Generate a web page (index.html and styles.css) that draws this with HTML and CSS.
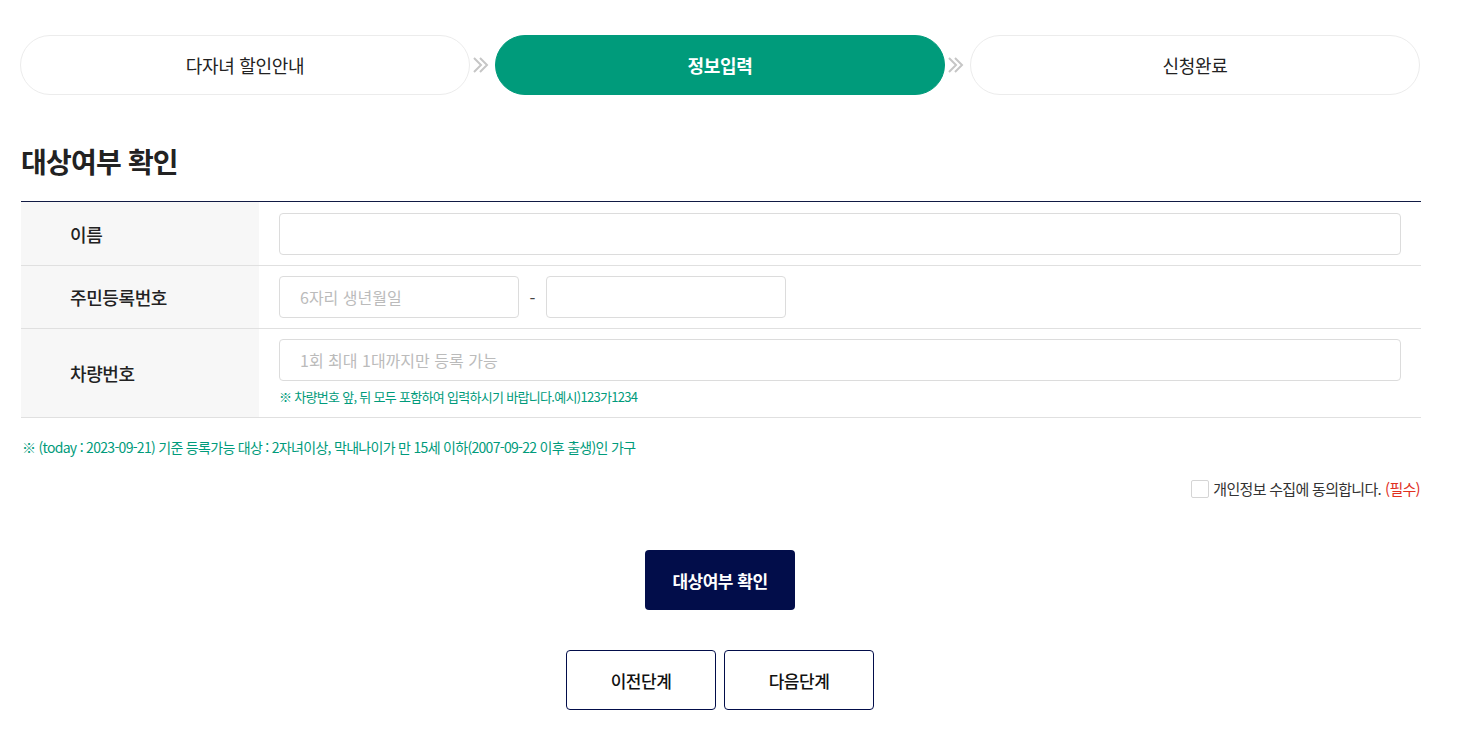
FILE: index.html
```html
<!DOCTYPE html>
<html lang="ko">
<head>
  <meta charset="utf-8">
  <title>다자녀 할인 - 정보입력</title>
  <link rel="stylesheet" href="styles.css">
</head>
<body>
  <div class="container">
    <ol class="steps">
      <li class="step">다자녀 할인안내</li>
      <li class="step-arrow">
        <svg width="18" height="18" viewBox="0 0 18 18"><path d="M2 2l7 7-7 7M8 2l7 7-7 7" fill="none" stroke="#c6c6c6" stroke-width="2"/></svg>
      </li>
      <li class="step active">정보입력</li>
      <li class="step-arrow">
        <svg width="18" height="18" viewBox="0 0 18 18"><path d="M2 2l7 7-7 7M8 2l7 7-7 7" fill="none" stroke="#c6c6c6" stroke-width="2"/></svg>
      </li>
      <li class="step">신청완료</li>
    </ol>

    <h2 class="title">대상여부 확인</h2>

    <table class="form-table">
      <tr>
        <th>이름</th>
        <td><input type="text" class="input full"></td>
      </tr>
      <tr>
        <th>주민등록번호</th>
        <td class="jumin-cell">
          <div class="jumin">
            <input type="text" class="input short" placeholder="6자리 생년월일">
            <span class="dash">-</span>
            <input type="password" class="input short">
          </div>
        </td>
      </tr>
      <tr>
        <th>차량번호</th>
        <td class="car">
          <input type="text" class="input full" placeholder="1회 최대 1대까지만 등록 가능">
          <p class="car-note">※ 차량번호 앞, 뒤 모두 포함하여 입력하시기 바랍니다.예시)123가1234</p>
        </td>
      </tr>
    </table>

    <p class="info">※ (today : 2023-09-21) 기준 등록가능 대상 : 2자녀이상, 막내나이가 만 15세 이하(2007-09-22 이후 출생)인 가구</p>

    <div class="agree">
      <label><input type="checkbox" class="chk"><span class="box"></span>개인정보 수집에 동의합니다. <em>(필수)</em></label>
    </div>

    <div class="btn-center">
      <button class="btn-check">대상여부 확인</button>
    </div>

    <div class="btn-pair">
      <button class="btn-line">이전단계</button>
      <button class="btn-line">다음단계</button>
    </div>
  </div>
</body>
</html>
```

FILE: styles.css
```css
body { margin: 0; font-family: "Noto Sans CJK KR", "Noto Sans", sans-serif; color: #222; background: #fff; }
.container { width: 1400px; margin: 0 0 0 20px; padding-top: 35px; }

.steps { display: flex; align-items: center; list-style: none; margin: 0; padding: 0; }
.step { width: 450px; height: 60px; box-sizing: border-box; border: 1px solid #ececec; border-radius: 30px; display: flex; align-items: center; justify-content: center; font-size: 18px; font-weight: 400; color: #222; letter-spacing: -0.3px; }
.step.active { background: #009b7b; border-color: #009b7b; color: #fff; font-weight: 700; }
.step-arrow { width: 25px; display: flex; justify-content: center; align-items: center; }
.step-arrow svg { display: block; margin-left: -4px; }

.title { margin: 46px 0 0 1px; font-size: 28px; font-weight: 700; letter-spacing: -0.8px; line-height: 40px; color: #222; }

.form-table { width: 1400px; margin-top: 20px; margin-left: 1px; border-collapse: collapse; border-top: 1px solid #111a44; }
.form-table th { width: 189px; background: #f7f7f7; text-align: left; padding: 0 0 0 49px; font-size: 18px; font-weight: 500; color: #222; border-bottom: 1px solid #e0e0e0; letter-spacing: -0.4px; }
.form-table td { padding: 11px 20px 10px 20px; border-bottom: 1px solid #e0e0e0; }
.form-table td.jumin-cell { padding-top: 10px; padding-bottom: 10px; }
.form-table td.car { padding-top: 10px; padding-bottom: 10px; }

.input { height: 42px; box-sizing: border-box; border: 1px solid #dcdcdc; border-radius: 4px; padding: 0 20px; font-family: inherit; font-size: 16px; color: #222; outline: none; display: block; }
.input::placeholder { color: #bbb; }
.input.full { width: 100%; }
.input.short { width: 240px; }
.jumin { display: flex; align-items: center; }
.dash { width: 27px; text-align: center; font-size: 17px; color: #444; }
.car-note { margin: 6px 0 0; font-size: 13px; color: #009b7b; letter-spacing: -0.7px; line-height: 20px; }

.info { margin: 19px 0 0 2px; font-size: 14px; color: #009b7b; letter-spacing: -0.7px; line-height: 20px; }

.agree { display: flex; justify-content: flex-end; margin-top: 21px; }
.agree label { display: flex; align-items: center; font-size: 15px; color: #333; letter-spacing: -0.7px; }
.agree .chk { display: none; }
.agree .box { width: 16px; height: 16px; border: 1px solid #d5d5d5; border-radius: 2px; margin-right: 4px; }
.agree em { font-style: normal; color: #e0311f; margin-left: 4px; }

.btn-center { display: flex; justify-content: center; margin-top: 51px; }
.btn-check { width: 150px; height: 60px; background: #020d4a; color: #fff; border: none; border-radius: 4px; font-family: inherit; font-size: 17px; font-weight: 700; letter-spacing: -0.5px; }

.btn-pair { display: flex; justify-content: center; gap: 8px; margin-top: 40px; }
.btn-line { width: 150px; height: 60px; background: #fff; color: #111; border: 1px solid #020d4a; border-radius: 4px; font-family: inherit; font-size: 17px; font-weight: 500; letter-spacing: -0.5px; }
```
